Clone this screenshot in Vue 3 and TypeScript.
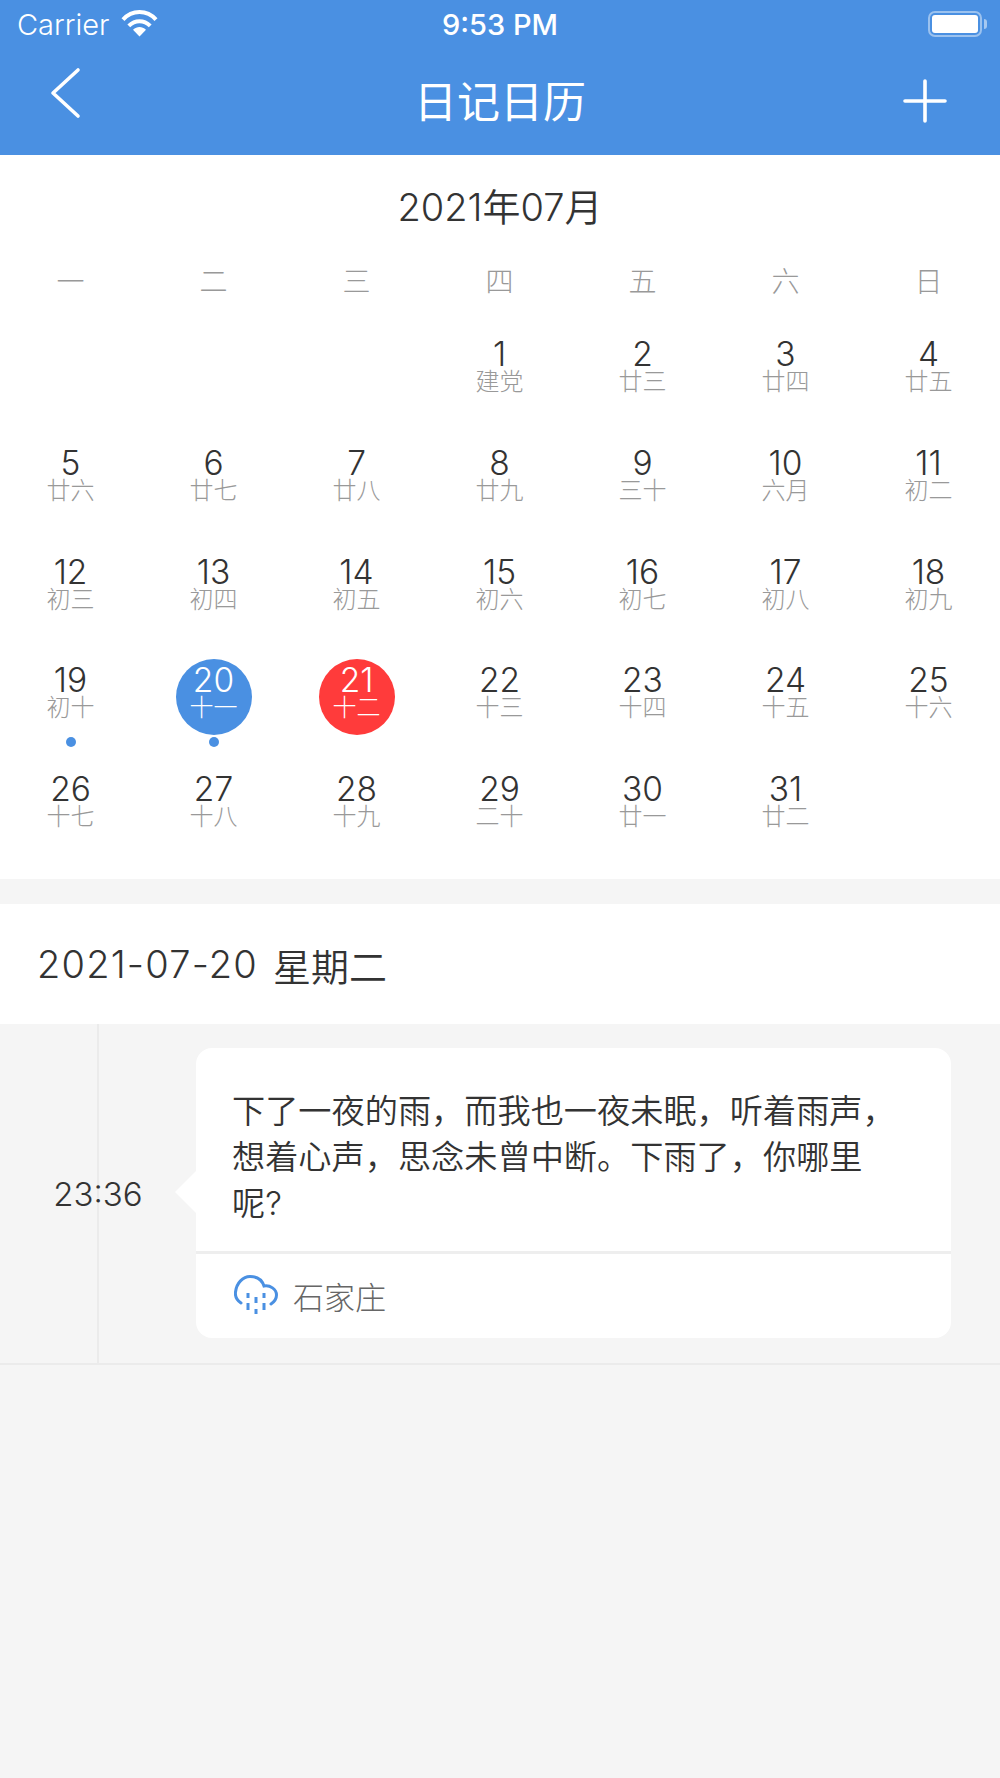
<script setup lang="ts">
interface Day { n: number; l: string; kind?: 'sel' | 'today'; dot?: boolean }
const weeks = ['一', '二', '三', '四', '五', '六', '日']
const lunar = ['建党','廿三','廿四','廿五','廿六','廿七','廿八','廿九','三十','六月','初二','初三','初四','初五','初六','初七','初八','初九','初十','十一','十二','十三','十四','十五','十六','十七','十八','十九','二十','廿一','廿二']
const days: Day[] = lunar.map((l, i) => ({
  n: i + 1,
  l,
  kind: i === 19 ? 'sel' : i === 20 ? 'today' : undefined,
  dot: i === 18 || i === 19,
}))
const blanks = [0, 1, 2]
</script>

<template>
  <div class="page">
    <header class="head">
      <div class="status">
        <div class="status-left">
          <span>Carrier</span>
          <svg class="wifi" width="37" height="27" viewBox="0 0 37 27">
            <path d="M18.5 26.500 L12 19.800 C16 16.200 21 16.200 25 19.800 Z" fill="#fff" />
            <path d="M7.800 15.800 C14 9.600 23 9.600 29.200 15.800" fill="none" stroke="#fff" stroke-width="4" />
            <path d="M2 9.600 C11 -0.500 26 -0.500 35 9.600" fill="none" stroke="#fff" stroke-width="4" />
          </svg>
        </div>
        <span class="clock">9:53 PM</span>
        <div class="battery"><i class="charge"></i><b class="nub"></b></div>
      </div>
      <div class="nav">
        <svg class="back" width="34" height="52" viewBox="0 0 34 52">
          <path d="M29 3 L4 26 L29 49" fill="none" stroke="#fff" stroke-width="3.6" stroke-linecap="round" stroke-linejoin="round" />
        </svg>
        <h1 class="title">日记日历</h1>
        <svg class="plus" width="44" height="44" viewBox="0 0 44 44">
          <path d="M2 22 H42 M22 2 V42" fill="none" stroke="#fff" stroke-width="3.6" stroke-linecap="round" />
        </svg>
      </div>
    </header>

    <section class="cal">
      <div class="month">2021年07月</div>
      <div class="weeks"><span v-for="w in weeks" :key="w">{{ w }}</span></div>
      <div class="grid">
        <div v-for="b in blanks" :key="'b' + b" class="cell"></div>
        <div v-for="d in days" :key="d.n" class="cell">
          <div class="bubble" :class="d.kind">
            <span class="num">{{ d.n }}</span>
            <span class="lun">{{ d.l }}</span>
            <i v-if="d.dot" class="dot"></i>
          </div>
        </div>
      </div>
    </section>

    <div class="date"><span class="ymd">2021-07-20</span><span class="wk">星期二</span></div>

    <section class="entry">
      <div class="when"><span>23:36</span></div>
      <article class="card">
        <p class="text">下了一夜的雨，而我也一夜未眠，听着雨声，想着心声，思念未曾中断。下雨了，你哪里呢?</p>
        <div class="place">
          <svg width="44" height="40" viewBox="0 0 44 40">
            <path d="M7 28 C2.500 25 1 21 1.500 17 C2.500 8 9 1.500 16 1.500 C23 1.500 28 5 30 11 C36 10 42.500 14 42.500 20 C42.500 24 40 27 37 29" fill="none" stroke="#4a90e2" stroke-width="3" stroke-linecap="round" />
            <path d="M14 18 V23 M14 28 V35 M22 22 V28 M22 34 V39 M30 18 V23 M30 28 V35" fill="none" stroke="#4a90e2" stroke-width="3" />
          </svg>
          <span>石家庄</span>
        </div>
      </article>
    </section>
  </div>
</template>

<style scoped>
.page {
  min-height: 1778px;
  background: #f5f5f5;
  color: #333;
  font-family: Inter, "Noto Sans CJK SC", sans-serif;
}
.head { height: 155px; background: #4a90e2; color: #fff; overflow: hidden; }
.status {
  position: relative;
  height: 48px;
  padding: 0 12px 0 17px;
  display: flex;
  align-items: center;
  justify-content: space-between;
  font-size: 29px;
}
.status-left { display: flex; align-items: center; gap: 12px; font-weight: 300; }
.wifi { margin-top: -1px; }
.clock {
  position: absolute;
  left: 0;
  right: 0;
  text-align: center;
  font-weight: 500;
}
.battery {
  position: relative;
  width: 54px;
  height: 26px;
  margin-right: 6px;
  box-sizing: border-box;
  border: 2px solid rgba(255, 255, 255, .45);
  border-radius: 7px;
  padding: 2px;
}
.charge { display: block; height: 100%; background: #fff; border-radius: 3px; }
.nub {
  position: absolute;
  right: -7px;
  top: 6px;
  width: 3px;
  height: 10px;
  background: rgba(255, 255, 255, .5);
  border-radius: 0 3px 3px 0;
}
.nav {
  position: relative;
  height: 107px;
  display: flex;
  align-items: center;
  justify-content: space-between;
  padding: 0 53px 0 49px;
}
.back { margin-top: -18px; }
.plus { margin-top: -1px; }
.title {
  position: absolute;
  left: 0;
  right: 0;
  top: 26px;
  margin: 0;
  text-align: center;
  font-size: 43px;
  line-height: 56px;
  font-weight: 400;
}
.cal { height: 724px; background: #fff; }
.month { height: 105px; line-height: 105px; text-align: center; font-size: 38px; font-weight: 350; }
.weeks {
  display: grid;
  grid-template-columns: repeat(7, 1fr);
  height: 44px;
  line-height: 44px;
  margin: 0 0 29px -1px;
  text-align: center;
  font-size: 28px;
  font-weight: 300;
  color: #999;
}
.grid { display: grid; grid-template-columns: repeat(7, 1fr); grid-auto-rows: 108.8px; margin-left: -1px; }
.cell { display: flex; justify-content: center; }
.bubble {
  position: relative;
  width: 76px;
  height: 76px;
  box-sizing: border-box;
  padding-top: 8px;
  border-radius: 50%;
  display: flex;
  flex-direction: column;
  align-items: center;
  flex: none;
}
.num { font-size: 33.5px; line-height: 26px; font-weight: 300; white-space: nowrap; }
.lun { margin-top: 2px; font-size: 24px; line-height: 26px; font-weight: 300; color: #999; white-space: nowrap; }
.sel { background: #4a90e2; }
.today { background: #ff3b3b; }
.sel .num, .sel .lun, .today .num, .today .lun { color: #fff; }
.dot {
  position: absolute;
  left: 33px;
  top: 78px;
  width: 10px;
  height: 10px;
  border-radius: 50%;
  background: #4a90e2;
}
.date {
  margin-top: 25px;
  height: 120px;
  padding-left: 37px;
  background: #fff;
  font-size: 38px;
  font-weight: 350;
  display: flex;
  align-items: center;
  gap: 15px;
}
.ymd { letter-spacing: 1.2px; }
.entry {
  height: 341px;
  box-sizing: border-box;
  border-bottom: 2px solid #ebebeb;
  display: flex;
  padding: 24px 49px 25px 0;
}
.when {
  position: relative;
  z-index: 0;
  width: 196px;
  flex: none;
  display: flex;
  align-items: center;
  justify-content: center;
  font-size: 33px;
  font-weight: 300;
  margin: -24px 0 -25px;
}
.when::before {
  content: "";
  position: absolute;
  left: 97px;
  top: 0;
  bottom: 0;
  width: 2px;
  background: #ebebeb;
}
.when span { position: relative; width: 196px; text-align: center; line-height: 48px; }
.when span::before {
  content: "";
  position: absolute;
  left: 90px;
  top: 0;
  width: 16px;
  height: 48px;
  background: #f5f5f5;
  z-index: -1;
}
.card {
  position: relative;
  flex: 1;
  background: #fff;
  border-radius: 16px;
  display: flex;
  flex-direction: column;
}
.card::before {
  content: "";
  position: absolute;
  left: -21px;
  top: 123px;
  border-style: solid;
  border-width: 21px 21px 21px 0;
  border-color: transparent #fff transparent transparent;
}
.text {
  flex: 1;
  margin: 0;
  padding: 40px 49px 0 36px;
  font-size: 33.2px;
  line-height: 46px;
  font-weight: 350;
}
.place {
  height: 87px;
  box-sizing: border-box;
  padding: 0 0 2px 38px;
  border-top: 3px solid #eee;
  display: flex;
  align-items: center;
  gap: 15px;
  font-size: 31px;
  color: #666;
  font-weight: 300;
}
</style>
